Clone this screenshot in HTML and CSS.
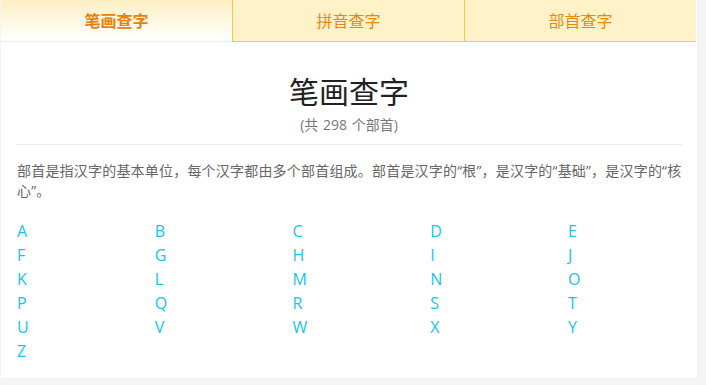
FILE: index.html
```html
<!DOCTYPE html>
<html lang="zh">
<head>
<meta charset="utf-8">
<title>笔画查字</title>
<link rel="stylesheet" href="styles.css">
</head>
<body>
<div class="card">
  <nav class="tabs">
    <a class="tab active">笔画查字</a>
    <a class="tab">拼音查字</a>
    <a class="tab">部首查字</a>
  </nav>
  <div class="content">
    <h1 class="title">笔画查字</h1>
    <p class="sub">(共 298 个部首)</p>
    <hr class="divider">
    <p class="desc">部首是指汉字的基本单位，每个汉字都由多个部首组成。部首是汉字的“根”，是汉字的“基础”，是汉字的“核心”。</p>
    <div class="letters">
      <a>A</a><a>B</a><a>C</a><a>D</a><a>E</a>
      <a>F</a><a>G</a><a>H</a><a>I</a><a>J</a>
      <a>K</a><a>L</a><a>M</a><a>N</a><a>O</a>
      <a>P</a><a>Q</a><a>R</a><a>S</a><a>T</a>
      <a>U</a><a>V</a><a>W</a><a>X</a><a>Y</a>
      <a>Z</a>
    </div>
  </div>
</div>
</body>
</html>
```
FILE: styles.css
```css
* { box-sizing: border-box; }
html, body { margin: 0; padding: 0; }
body {
  background: #f4f4f4;
  font-family: "Noto Sans CJK SC", "Open Sans", sans-serif;
  width: 706px;
  height: 385px;
  overflow: hidden;
}
.card {
  background: #fff;
  margin-left: 1px;
  width: 696px;
  height: 378px;
}
.tabs {
  display: flex;
  height: 42px;
}
.tab {
  flex: 0 0 232px;
  display: flex;
  align-items: center;
  justify-content: center;
  font-size: 16px;
  color: #e8890f;
  background: #fff1c8;
  border-bottom: 1px solid #f9c74a;
  padding-bottom: 2px;
}
.tab + .tab { border-left: 1px solid #f9c74a; }
.tab.active {
  background: linear-gradient(#fdefc3, #ffffff);
  border-bottom-color: transparent;
  color: #e8800a;
  font-weight: bold;
  flex-basis: 231px;
}
.content { padding: 0 15px 15px; }
.title {
  margin: 28px 0 0;
  font-size: 30px;
  line-height: 40px;
  font-weight: normal;
  color: #222;
  text-align: center;
}
.sub {
  margin: 5px 0 0;
  font-family: "Open Sans", "Noto Sans CJK SC", sans-serif;
  font-size: 14px;
  line-height: 20px;
  color: #777;
  text-align: center;
  word-spacing: 1px;
}
.divider {
  margin: 9px 0 0;
  border: 0;
  border-top: 1px solid #ececec;
  height: 0;
}
.desc {
  margin: 16px 0 0;
  font-family: "Open Sans", "Noto Sans CJK SC", sans-serif;
  font-size: 14px;
  line-height: 20px;
  color: #666;
  padding-left: 1px;
  letter-spacing: 0.2px;
}
.letters {
  margin-top: 18px;
  display: grid;
  grid-template-columns: repeat(5, 137.75px);
  padding-left: 1px;
}
.letters a {
  font-family: "Open Sans", "Noto Sans", sans-serif;
  font-size: 16px;
  line-height: 24px;
  color: #18c3ef;
}
```
